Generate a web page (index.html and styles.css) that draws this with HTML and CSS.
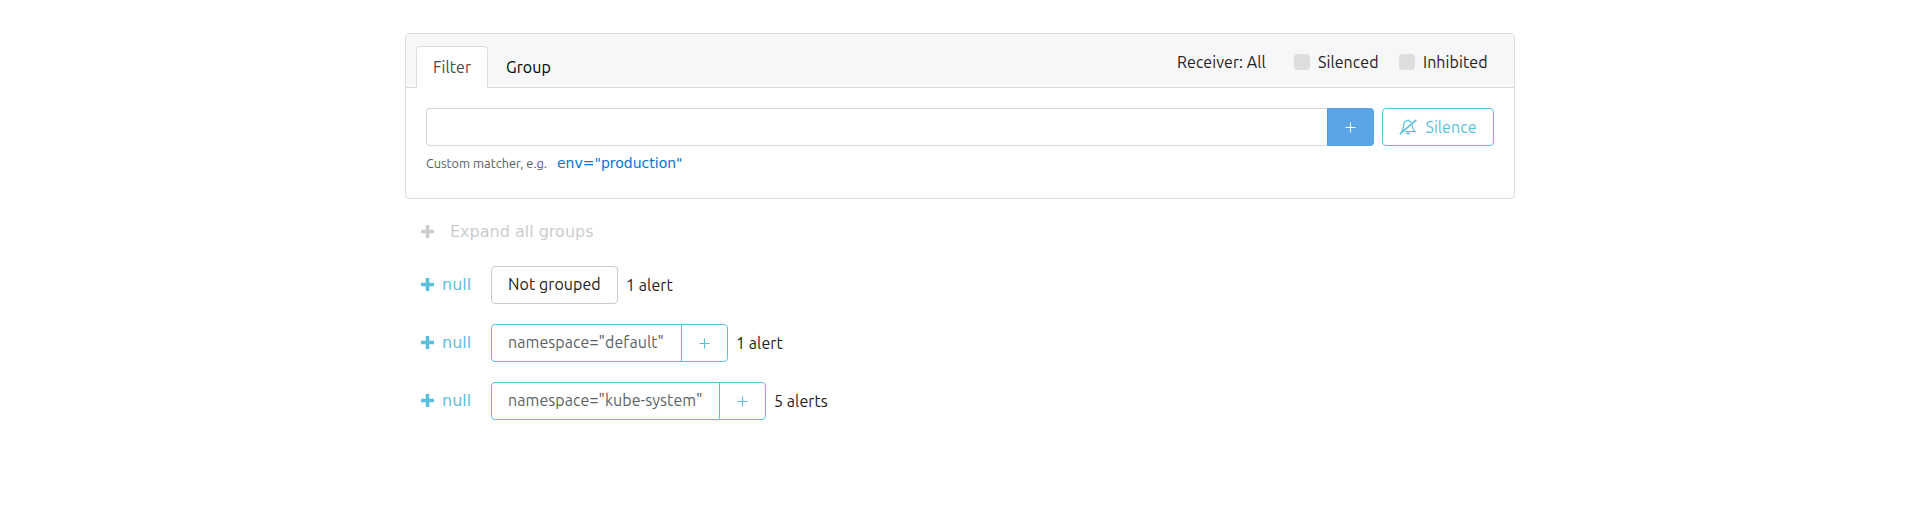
FILE: index.html
```html
<!DOCTYPE html>
<html lang="en">
<head>
<meta charset="utf-8">
<title>Alerts</title>
<link rel="stylesheet" href="styles.css">
</head>
<body>
<main class="container">
  <section class="card">
    <header class="card-header">
      <nav class="tabs">
        <a class="tab tab-active">Filter</a>
        <a class="tab">Group</a>
      </nav>
      <div class="options">
        <span class="receiver">Receiver: All</span>
        <label class="option silenced"><i class="checkbox"></i><span>Silenced</span></label>
        <label class="option"><i class="checkbox"></i><span class="inhibited">Inhibited</span></label>
      </div>
    </header>
    <div class="card-body">
      <div class="filter-row">
        <div class="input-group">
          <div class="input"></div>
          <button class="add"><svg class="plus" viewBox="0 0 11 11"><path d="M5.5 .5v10M.5 5.5h10"/></svg></button>
        </div>
        <button class="silence">
          <svg class="bell" viewBox="0 0 18 16"><path d="M2.500 12.500C4.800 10.500 4.300 8 4.800 5.300C5.300 2.800 7 1.700 9 1.700S11.600 2.400 12.600 3.600M13.300 6C13.500 9 13.900 11 15.800 12.500H6.500M9 .5v1.300"/><path class="slash" d="M.8 15.200L17.300.8"/><path class="clapper" d="M7 13.500h4c0 2.600-4 2.600-4 0z"/></svg>
          <span>Silence</span>
        </button>
      </div>
      <div class="hint"><span class="hint-text">Custom matcher, e.g.</span><a class="example">env="production"</a></div>
    </div>
  </section>

  <div class="expand"><svg class="bold-plus" viewBox="0 0 13 13"><path d="M4.700 0h3.600v4.700H13v3.600H8.300V13H4.700V8.300H0V4.700h4.700z"/></svg><span>Expand all groups</span></div>

  <div class="group-row">
    <a class="toggle"><svg class="bold-plus" viewBox="0 0 13 13"><path d="M4.700 0h3.600v4.700H13v3.600H8.300V13H4.700V8.300H0V4.700h4.700z"/></svg><span>null</span></a>
    <div class="pill pill-plain"><span class="pill-text">Not grouped</span></div>
    <span class="count">1 alert</span>
  </div>
  <div class="group-row">
    <a class="toggle"><svg class="bold-plus" viewBox="0 0 13 13"><path d="M4.700 0h3.600v4.700H13v3.600H8.300V13H4.700V8.300H0V4.700h4.700z"/></svg><span>null</span></a>
    <div class="pill pill-default"><span class="label pill-text">namespace="default"</span><span class="pill-add"><svg class="plus" viewBox="0 0 11 11"><path d="M5.500 .5v10M.5 5.500h10"/></svg></span></div>
    <span class="count">1 alert</span>
  </div>
  <div class="group-row">
    <a class="toggle"><svg class="bold-plus" viewBox="0 0 13 13"><path d="M4.700 0h3.600v4.700H13v3.600H8.300V13H4.700V8.300H0V4.700h4.700z"/></svg><span>null</span></a>
    <div class="pill pill-kube"><span class="label pill-text">namespace="kube-system"</span><span class="pill-add"><svg class="plus" viewBox="0 0 11 11"><path d="M5.500 .5v10M.5 5.500h10"/></svg></span></div>
    <span class="count">5 alerts</span>
  </div>
</main>
</body>
</html>
```
FILE: styles.css
```css
* { box-sizing: border-box; }
body { margin: 0; background: #fff; color: #1f2122; font: 16px/24px "Ubuntu", "Noto Sans", sans-serif; letter-spacing: .07px; }
.container { width: 1110px; margin-left: 405px; padding-top: 33px; }
.card { height: 166px; border: 1px solid #dcdddd; border-radius: 4px; }
.card-header { display: flex; justify-content: space-between; height: 54px; padding: 12px 26px 0 10px; background: #f7f7f9; border-bottom: 1px solid #d9d9db; border-radius: 3px 3px 0 0; }
.tabs { display: flex; height: 42px; }
.tab { height: 42px; padding: 8px 16px 8px 17px; border: 1px solid transparent; border-bottom: 0; border-radius: 4px 4px 0 0; color: #000; white-space: nowrap; }
.tab-active { width: 72px; padding-left: 16px; background: #fff; border-color: #ddd; color: #464a4c; }
.options { display: flex; align-items: center; height: 32px; white-space: nowrap; }
.receiver { width: 89px; margin-right: 28px; }
.option { display: flex; align-items: center; gap: 8px; }
.silenced { width: 105px; }
.checkbox { width: 16px; height: 16px; background: #ddd; border-radius: 4px; }
.inhibited { width: 65px; }
.card-body { padding: 20px; }
.filter-row { display: flex; gap: 8px; }
.input-group { display: flex; flex: 1; height: 38px; }
.input { flex: 1; border: 1px solid #d5d6d7; border-right: 0; border-radius: 4px 0 0 4px; }
button { display: flex; align-items: center; justify-content: center; padding: 0; font: inherit; height: 38px; }
.add { width: 47px; background: #5ba5e6; color: #fff; border: 1px solid #5ba5e6; border-left-color: #439be5; border-radius: 0 4px 4px 0; }
.plus { width: 11px; height: 11px; fill: none; stroke: currentColor; stroke-width: 1.1; }
.silence { width: 112px; gap: 8px; background: #fff; color: #5bc0de; border: 1px solid #5bc0de; border-radius: 4px; letter-spacing: .07px; }
.bell { width: 18px; height: 16px; fill: none; stroke: currentColor; stroke-width: 1.2; }
.bell .slash { stroke-width: 1.700; }
.bell .clapper { fill: currentColor; stroke: none; }
.hint { display: flex; align-items: center; height: 24px; margin-top: 5px; white-space: nowrap; color: #565e64; font-size: 12.800px; letter-spacing: 0; }
.hint-text { width: 131px; }
.example { color: #0275d8; font: 14px/24px "DejaVu Sans", sans-serif; }
.expand { display: flex; align-items: center; gap: 16px; height: 24px; margin: 21px 0 22px 16px; color: #ccc; font: 16px/24px "DejaVu Sans", sans-serif; letter-spacing: 0; }
.bold-plus { width: 13px; height: 13px; margin-bottom: 1px; fill: currentColor; }
.group-row { display: flex; align-items: center; height: 38px; margin-bottom: 20px; white-space: nowrap; }
.toggle { display: flex; align-items: center; gap: 8px; width: 70px; margin-left: 16px; color: #5bc0de; font: 16px/24px "DejaVu Sans", sans-serif; letter-spacing: 0; }
.pill { display: flex; align-items: center; height: 38px; border: 1px solid #5bc0de; border-radius: 4px; color: #5b6369; }
.pill-text { padding-bottom: 2px; }
.pill-plain { width: 127px; padding-left: 16px; border-color: #ccc; color: #1f2122; }
.pill-default { width: 237px; }
.pill-kube { width: 275px; }
.label { flex: 1; padding-left: 16px; }
.pill-add { display: flex; align-items: center; justify-content: center; width: 46px; height: 36px; border-left: 1px solid #5bc0de; color: #5bc0de; }
.count { margin-left: 8px; }
```
